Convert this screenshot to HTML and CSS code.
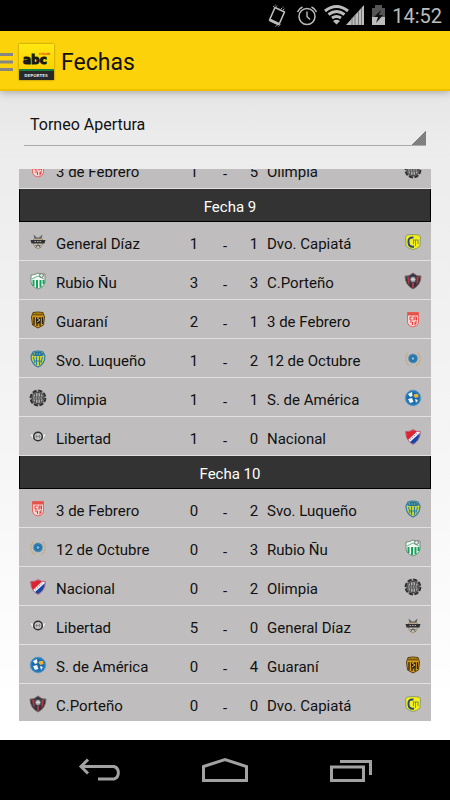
FILE: index.html
```html
<!DOCTYPE html>
<html lang="es">
<head>
<meta charset="utf-8">
<meta name="viewport" content="width=device-width, initial-scale=1">
<title>Fechas</title>
<link rel="stylesheet" href="styles.css">
</head>
<body>
<svg class="sprite" aria-hidden="true">
  <symbol id="febrero" viewBox="0 0 18 18">
    <path d="M3.500 1.500H14.500V12Q13.500 15.500 9 16Q4.500 15.500 3.500 12Z" fill="#f5d5d3" stroke="#e8665f"/>
    <path d="M3.500 1.500H14.500V4.500H3.500Z" fill="#e4524c"/>
    <path d="M8.500 6H6V9H8.500M10 9.500V6H12.500V9.500M10 8H12.500M6 11H8.500V14M11 14.500V11H13M11 12.500H12.500" fill="none" stroke="#e63c36"/>
  </symbol>
  <symbol id="olimpia" viewBox="0 0 18 18">
    <circle cx="9" cy="9" r="7.400" fill="#8d8d8d" stroke="#303030" stroke-width="2" stroke-dasharray="4.200 1.600"/>
    <circle cx="9" cy="9" r="5.600" fill="#aaa" stroke="#444"/>
    <path d="M6.500 4V14M9 3.500V14.500M11.500 4V14" stroke="#555"/>
    <path d="M2.500 7.500H15.500V10.500H2.500Z" fill="#555"/>
    <path d="M4 9H14" stroke="#bbb" stroke-dasharray="1.500 1"/>
  </symbol>
  <symbol id="diaz" viewBox="0 0 18 18">
    <path d="M4.500 1.500L8 4.500H10L13.500 1.500L12.500 6.500H5.500Z" fill="#666"/>
    <path d="M4.500 6H13.500V11Q12.500 15 9 16Q5.500 15 4.500 11Z" fill="#c2bfb8" stroke="#a5916b"/>
    <path d="M1.500 7H16.500L15.500 10.500H2.500Z" fill="#333"/>
    <path d="M5.500 8.500H12.500" stroke="#aaa" stroke-dasharray="1.500 1"/>
    <path d="M6.500 15L9 11.500L11.500 15M6.500 12.500H11.500" fill="none" stroke="#666"/>
  </symbol>
  <symbol id="rubio" viewBox="0 0 18 18">
    <path d="M2 3Q6 3 9 1Q12 3 16 2V10Q15 15 9 17Q3 15 2 10Z" fill="#f4f8f5" stroke="#6f8d7b"/>
    <path d="M4.500 8V14M8 8V16M11.500 8V15.500M14.500 8V12" stroke="#16a45b" stroke-width="2"/>
    <path d="M3 7L9 4L15 7" fill="none" stroke="#5cbc8b"/>
    <circle cx="12.500" cy="3.500" r="2" fill="#ddd" stroke="#777"/>
  </symbol>
  <symbol id="guarani" viewBox="0 0 18 18">
    <path d="M4 1.500Q9 .5 14 1.500L15.500 6L14.500 14L9 17L3.500 14L2.500 6Z" fill="#d79a17" stroke="#57420e"/>
    <path d="M4 2.500H14V4.500H4Z" fill="#7a5b10"/>
    <path d="M5 6V14M8 6V15M11 6V15M13.500 6V13" stroke="#282316" stroke-width="1.300"/>
    <path d="M7 7H11.500V11L9 13L7 11Z" fill="#1f1f20"/>
    <path d="M8 7L11 9L8 11" fill="none" stroke="#e6c45e"/>
  </symbol>
  <symbol id="luqueno" viewBox="0 0 18 18">
    <path d="M4 2Q9 0 14 2L16 6Q16 14 9 17Q2 14 2 6Z" fill="#cbd13e" stroke="#317da6" stroke-width="1.200"/>
    <path d="M3 5Q5 1 9 1.500Q13 1 15 5L13 6H5Z" fill="#2473a5"/>
    <path d="M5 4H13" stroke="#d6d94e" stroke-dasharray="1 1.600"/>
    <path d="M4.500 7L6 13M7.500 6.500V15M10.500 6.500V15M13.500 7L12 13M6 11H12" stroke="#2b82a4"/>
  </symbol>
  <symbol id="libertad" viewBox="0 0 18 18">
    <path d="M.5 5.500L5 6.500L4.500 11L2.500 9.500Z M17.500 5.500L13 6.500L13.500 11L15.500 9.500Z" fill="#eee" stroke="#aaa" stroke-width=".6"/>
    <circle cx="9" cy="8.500" r="4.300" fill="#c6c5c6" stroke="#303030" stroke-width="1.500"/>
    <path d="M7.500 7V10M10.500 7V10M6.500 8.500H11.500" stroke="#888"/>
  </symbol>
  <symbol id="capiata" viewBox="0 0 18 18">
    <path d="M3 2Q9 1 15 2L16.500 4L16 13Q13 16 9 16.500Q5 16 2 13L1.500 4Z" fill="#f5f019" stroke="#8b9c74"/>
    <path d="M9.500 4.500Q4 4 4.500 9Q4.500 14.500 10 13.500" fill="none" stroke="#26467d" stroke-width="2"/>
    <path d="M9.500 7V11M11.500 7V13M14 7V11M9 7H14.500" stroke="#7c9054"/>
  </symbol>
  <symbol id="porteno" viewBox="0 0 18 18">
    <path d="M1 4Q5 5 9 1Q13 5 17 4Q17 13 9 17Q1 13 1 4Z" fill="#303348" stroke="#7d6963"/>
    <path d="M3 5L5.500 4.500V13L4 11ZM12.500 4.500L15 5L14 11L12.500 13ZM8 11H10V15.500H8Z" fill="#b43a38"/>
    <circle cx="9" cy="7.500" r="3" fill="#aeb3b7" stroke="#494a52"/>
    <path d="M7.500 8L9 6.500L10.500 8" fill="none" stroke="#eee"/>
  </symbol>
  <symbol id="octubre" viewBox="0 0 18 18">
    <path d="M4 3Q0 8 3 13L6 16M14 3Q18 8 15 13L12 16" fill="none" stroke="#c7a873" stroke-width="1.400" stroke-dasharray="1.600 1"/>
    <circle cx="9" cy="8.500" r="4.600" fill="#317bad" stroke="#6998b5" stroke-dasharray="1 1"/>
    <circle cx="9" cy="8.500" r="2" fill="#7ab9dc" stroke="#1465a0"/>
  </symbol>
  <symbol id="america" viewBox="0 0 18 18">
    <circle cx="9" cy="9" r="7.900" fill="#297ab7" stroke="#71a8cf" stroke-dasharray="1.500 1"/>
    <circle cx="9" cy="9" r="5.800" fill="#1768a9"/>
    <path d="M4 5L8 3L8.500 7L6 8ZM4 10L8 9L9.500 13L6 14ZM11 10L14 11L12 14Z" fill="#f3f7fb"/>
    <path d="M10.500 5L14 5L14.500 8L11.500 9L9.500 7Z" fill="#efb42e"/>
  </symbol>
  <symbol id="nacional" viewBox="0 0 18 18">
    <path d="M1.500 3.500Q6 4 9 1.500Q12 4 16.500 3.500Q16 13 9 16.500Q2 13 1.500 3.500Z" fill="#f0eef2" stroke="#b5647f"/>
    <path d="M2 4Q6 4 9 2L13 3.500L4 12Q2 9 2 4Z" fill="#dc2330"/>
    <path d="M16 5Q15 13 9 16L6 14Z" fill="#1545a5"/>
    <path d="M6 11.500L13 5.500" stroke="#8992bd" stroke-dasharray="1.500 1"/>
  </symbol>
</svg>

<div class="screen">
  <div class="status">
    <svg width="22" height="24" viewBox="0 0 22 24" fill="none" stroke="#bdbdbd" aria-hidden="true">
      <path d="M7 3.500L16.500 8L11 20.500L1.500 16Z" stroke-width="1.600" stroke-linejoin="round"/>
      <path d="M2 16L10.500 20" stroke-width="3"/>
      <path d="M5 3L7.500 1M7.500 3L9.500 1.500M13 5L15.500 3M15 6L17 4.500M7.500 22.500L10 20.500M10.500 22.500L12.500 20.500" stroke-dasharray="1.500 .7"/>
    </svg>
    <svg width="22" height="24" viewBox="0 0 22 24" fill="none" stroke="#bdbdbd" aria-hidden="true">
      <circle cx="11" cy="12.500" r="8" stroke-width="1.500"/>
      <path d="M11 7.500V12.500L14 15.500" stroke-width="1.400"/>
      <path d="M1.500 8Q3 4.500 6.500 3M15.500 3Q19 4.500 20.500 8" stroke-width="1.600"/>
    </svg>
    <svg width="41" height="24" viewBox="0 0 41 24" fill="none" stroke="#bdbdbd" aria-hidden="true">
      <path d="M1 7Q12.500-2 24 7M4.500 10.500Q12.500 4.500 20.500 10.500M8 14Q12.500 11 17 14" stroke-width="3"/>
      <path d="M9 17Q12.500 14.500 16 17L12.500 20.500Z" fill="#bdbdbd" stroke="none"/>
      <path d="M22 21L40 1V21Z" fill="#bdbdbd" stroke="none"/>
      <path d="M28 14V21M31 11V21M34.500 7V21M37.500 4V21" stroke="#777"/>
    </svg>
    <svg width="15" height="24" viewBox="0 0 15 24" aria-hidden="true">
      <path d="M1 4H4V1H11V4H14V21H1Z" fill="#555"/>
      <path d="M1 13H14V21H1Z" fill="#bdbdbd"/>
      <path d="M10 6L3 13H7L5 19L12 11H8Z" fill="#111"/>
    </svg>
    <span class="clock">14:52</span>
  </div>

  <header class="bar">
    <button class="menu" type="button" aria-label="Menú">
      <svg width="13" height="20" viewBox="0 0 13 20"><path d="M0 2.500H13M0 10H13M0 17.500H13" stroke="#858585" stroke-width="3"/></svg>
    </button>
    <svg class="logo" width="35" height="36" viewBox="0 0 35 36" role="img" aria-label="abc color deportes">
      <defs>
        <linearGradient id="sun" x2="0" y2="1"><stop stop-color="#ffe812"/><stop offset="1" stop-color="#fbd100"/></linearGradient>
      </defs>
      <path d="M0 0H35V26H0Z" fill="url(#sun)"/>
      <path d="M0 26H35V36H0Z" fill="#292929"/>
      <path d="M0 25H35V27H0Z" fill="#16823c"/>
      <text class="logo-name" x="4" y="20">abc</text>
      <text class="logo-color" x="20" y="11">COLOR</text>
      <text class="logo-section" x="17" y="33" text-anchor="middle">DEPORTES</text>
    </svg>
    <h1>Fechas</h1>
  </header>

  <main>
    <div class="picker">
      <select aria-label="Torneo">
        <option>Torneo Apertura</option>
      </select>
    </div>

    <div class="list">
      <table>
        <colgroup><col class="c-crest"><col><col class="c-score"><col class="c-dash"><col class="c-away"><col><col class="c-end"></colgroup>
        <tbody>
          <tr><td><svg class="crest"><use href="#febrero"/></svg></td><td class="team">3 de Febrero</td><td>1</td><td class="dash">-</td><td>5</td><td class="team">Olimpia</td><td><svg class="crest"><use href="#olimpia"/></svg></td></tr>
        </tbody>
        <tbody>
          <tr><th colspan="7">Fecha 9</th></tr>
          <tr><td><svg class="crest"><use href="#diaz"/></svg></td><td class="team">General Díaz</td><td>1</td><td class="dash">-</td><td>1</td><td class="team">Dvo. Capiatá</td><td><svg class="crest"><use href="#capiata"/></svg></td></tr>
          <tr><td><svg class="crest"><use href="#rubio"/></svg></td><td class="team">Rubio Ñu</td><td>3</td><td class="dash">-</td><td>3</td><td class="team">C.Porteño</td><td><svg class="crest"><use href="#porteno"/></svg></td></tr>
          <tr><td><svg class="crest"><use href="#guarani"/></svg></td><td class="team">Guaraní</td><td>2</td><td class="dash">-</td><td>1</td><td class="team">3 de Febrero</td><td><svg class="crest"><use href="#febrero"/></svg></td></tr>
          <tr><td><svg class="crest"><use href="#luqueno"/></svg></td><td class="team">Svo. Luqueño</td><td>1</td><td class="dash">-</td><td>2</td><td class="team">12 de Octubre</td><td><svg class="crest"><use href="#octubre"/></svg></td></tr>
          <tr><td><svg class="crest"><use href="#olimpia"/></svg></td><td class="team">Olimpia</td><td>1</td><td class="dash">-</td><td>1</td><td class="team">S. de América</td><td><svg class="crest"><use href="#america"/></svg></td></tr>
          <tr><td><svg class="crest"><use href="#libertad"/></svg></td><td class="team">Libertad</td><td>1</td><td class="dash">-</td><td>0</td><td class="team">Nacional</td><td><svg class="crest"><use href="#nacional"/></svg></td></tr>
        </tbody>
        <tbody>
          <tr><th colspan="7">Fecha 10</th></tr>
          <tr><td><svg class="crest"><use href="#febrero"/></svg></td><td class="team">3 de Febrero</td><td>0</td><td class="dash">-</td><td>2</td><td class="team">Svo. Luqueño</td><td><svg class="crest"><use href="#luqueno"/></svg></td></tr>
          <tr><td><svg class="crest"><use href="#octubre"/></svg></td><td class="team">12 de Octubre</td><td>0</td><td class="dash">-</td><td>3</td><td class="team">Rubio Ñu</td><td><svg class="crest"><use href="#rubio"/></svg></td></tr>
          <tr><td><svg class="crest"><use href="#nacional"/></svg></td><td class="team">Nacional</td><td>0</td><td class="dash">-</td><td>2</td><td class="team">Olimpia</td><td><svg class="crest"><use href="#olimpia"/></svg></td></tr>
          <tr><td><svg class="crest"><use href="#libertad"/></svg></td><td class="team">Libertad</td><td>5</td><td class="dash">-</td><td>0</td><td class="team">General Díaz</td><td><svg class="crest"><use href="#diaz"/></svg></td></tr>
          <tr><td><svg class="crest"><use href="#america"/></svg></td><td class="team">S. de América</td><td>0</td><td class="dash">-</td><td>4</td><td class="team">Guaraní</td><td><svg class="crest"><use href="#guarani"/></svg></td></tr>
          <tr><td><svg class="crest"><use href="#porteno"/></svg></td><td class="team">C.Porteño</td><td>0</td><td class="dash">-</td><td>0</td><td class="team">Dvo. Capiatá</td><td><svg class="crest"><use href="#capiata"/></svg></td></tr>
        </tbody>
      </table>
    </div>
  </main>

  <nav class="keys">
    <button type="button" aria-label="Atrás">
      <svg width="44" height="26" viewBox="0 0 44 26"><path d="M3 9.500H36A6 6.500 0 0 1 36 22H20M10 2.500L3 9.500L10 16.500"/></svg>
    </button>
    <button type="button" aria-label="Inicio">
      <svg width="48" height="26" viewBox="0 0 48 26"><path d="M2.500 9.500L24 2.500L45.500 9.500V23.500H2.500Z"/></svg>
    </button>
    <button type="button" aria-label="Recientes">
      <svg width="44" height="26" viewBox="0 0 44 26"><path d="M3.500 10H35.500V23.500H3.500ZM12 4.500H42.500V18"/></svg>
    </button>
  </nav>
</div>
</body>
</html>
```
FILE: styles.css
```css
* {
  box-sizing: border-box;
}

body {
  margin: 0;
  font-family: Roboto, "Liberation Sans", sans-serif;
  font-size: 15px;
  color: #111;
}

button {
  padding: 0;
  border: 0;
  background: none;
}

svg {
  display: block;
}

.sprite {
  position: absolute;
  width: 0;
  height: 0;
}

.screen {
  display: flex;
  flex-direction: column;
  height: 100vh;
}

.status {
  display: flex;
  flex: none;
  align-items: center;
  justify-content: flex-end;
  gap: 6px;
  height: 31px;
  padding-right: 8px;
  background: #000;
}

.clock {
  font-size: 20px;
  line-height: 24px;
  color: #bdbdbd;
}

.bar {
  display: flex;
  flex: none;
  align-items: center;
  height: 60px;
  padding-top: 4px;
  border-bottom: 2px solid #f0c000;
  background: #fcd20a;
  box-shadow: 0 1px 8px rgba(0, 0, 0, 0.3);
  z-index: 1;
}

.logo {
  margin: 0 7px 0 6px;
  box-shadow: 0 0 2px rgba(0, 0, 0, 0.4);
}

.logo-name {
  font: bold 12px "DejaVu Sans", sans-serif;
  fill: #171717;
  stroke: #171717;
}

.logo-color {
  font: bold 3px "DejaVu Sans", sans-serif;
  fill: #e04a10;
}

.logo-section {
  font: bold 4px "DejaVu Sans", sans-serif;
  fill: #ddd;
}

h1 {
  margin: 0;
  font-size: 23px;
  font-weight: 400;
}

main {
  display: flex;
  flex: 1;
  flex-direction: column;
  min-height: 0;
  padding: 12px 19px 19px;
  background: linear-gradient(#e6e6e6, #ececec 8%, #f3f3f3 45%, #fff 95%);
}

.picker {
  flex: none;
  margin: 0 5px 23px;
}

select {
  display: block;
  width: 100%;
  height: 43px;
  padding: 0 6px;
  border: 0;
  border-bottom: 1px solid #aaa;
  border-radius: 0;
  appearance: none;
  background: linear-gradient(135deg, transparent 50%, #808080 50%) right bottom / 15px 15px no-repeat;
  font: inherit;
  font-size: 16px;
  color: inherit;
}

.list {
  flex: 1;
  min-height: 0;
  overflow: hidden;
}

table {
  width: 100%;
  margin-top: -19px;
  border-spacing: 0;
  table-layout: fixed;
}

.c-crest {
  width: 37px;
}

.c-score {
  width: 30px;
}

.c-dash {
  width: 32px;
}

.c-away {
  width: 26px;
}

.c-end {
  width: 41px;
}

td {
  height: 39px;
  padding: 6px 0 0;
  border-bottom: 1px solid #e0e0e0;
  background: #bfbdbe;
  text-align: center;
}

td:last-child {
  padding-left: 4px;
}

th {
  height: 33px;
  padding: 3px 0 0 10px;
  border: solid #000;
  border-width: 0 1px 1px;
  background: #333;
  font-weight: 400;
  color: #fff;
}

.team {
  text-align: left;
  white-space: nowrap;
}

.dash {
  padding-top: 9px;
}

.crest {
  width: 18px;
  height: 18px;
  margin: -4px auto 0;
}

.keys {
  display: grid;
  flex: none;
  grid-template-columns: repeat(3, 1fr);
  height: 60px;
  padding: 0 37px;
  background: #000;
}

.keys button {
  display: grid;
  place-items: center;
}

.keys path {
  fill: none;
  stroke: #a2a2a2;
  stroke-width: 3;
}
```
